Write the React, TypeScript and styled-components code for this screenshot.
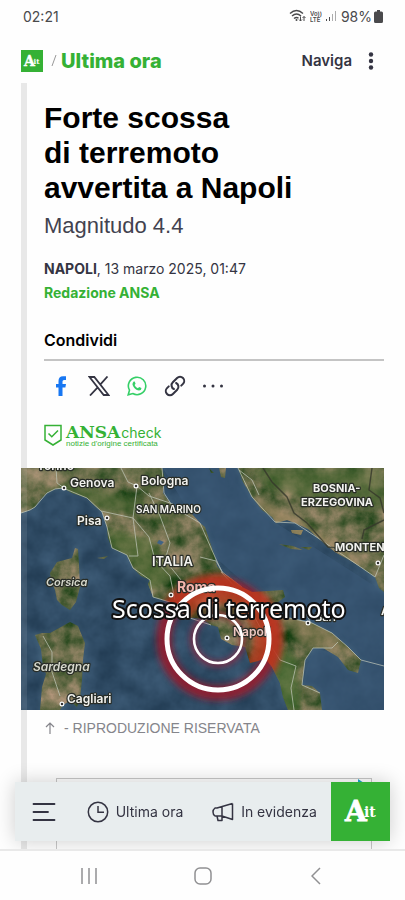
import React from "react";
import styled, { createGlobalStyle } from "styled-components";

const GlobalStyle = createGlobalStyle`
  * { box-sizing: border-box; }
  body { margin: 0; background: #fefefe; color: #000; font-family: Inter, "Liberation Sans", sans-serif; }
  h1, h2, p, figure { margin: 0; }
  button { font: inherit; color: inherit; background: none; border: 0; padding: 0; cursor: pointer; }
  a { color: inherit; text-decoration: none; }
  svg { display: block; }
`;

const green = "#35b135";
const ink = "#343442";

const Screen = styled.div`
  height: 100vh;
  display: flex;
  flex-direction: column;
  overflow: hidden;
`;

const StatusBar = styled.div`
  flex: none;
  height: 32px;
  padding: 0 22px 0 23px;
  display: flex;
  align-items: center;
  justify-content: space-between;
  font-size: 14px;
  color: #4a4a4c;
`;

const StatusIcons = styled.div`
  display: flex;
  align-items: center;
  gap: 4px;
`;

const Battery = styled.span`
  display: flex;
  align-items: center;
  gap: 2px;
`;

const Header = styled.header`
  flex: none;
  height: 51px;
  padding: 6px 21px 0;
  display: flex;
  align-items: center;
  justify-content: space-between;
`;

const Brand = styled.div`
  display: flex;
  align-items: center;
  gap: 8px;
`;

const Section = styled.a`
  color: ${green};
  font-size: 20px;
  line-height: 24px;
  font-weight: 800;
`;

const SectionGroup = styled.div`
  display: flex;
  align-items: center;
  gap: 4px;
`;

const Navigate = styled.button`
  display: flex;
  align-items: center;
  gap: 16px;
  font-size: 15px;
  font-weight: 600;
  color: ${ink};
`;

const Main = styled.main`
  flex: 1;
  min-height: 0;
  overflow: hidden;
  padding: 0 21px;
`;

const Article = styled.article`
  padding: 17px 0 0 17px;
  border-left: 6px solid #e8e8e8;
`;

const Title = styled.h1`
  font-family: "Liberation Sans", Arial, sans-serif;
  font-size: 30px;
  line-height: 35px;
  font-weight: 700;
`;

const Subtitle = styled.p`
  margin-top: 8px;
  font-family: "Liberation Sans", Arial, sans-serif;
  font-size: 22px;
  line-height: 26px;
  color: #42424f;
`;

const Meta = styled.p`
  margin-top: 18px;
  font-size: 14px;
  line-height: 24px;
  color: ${ink};
`;

const Author = styled.a`
  display: block;
  color: ${green};
  font-size: 14px;
  line-height: 24px;
  font-weight: 700;
`;

const ShareTitle = styled.h2`
  margin-top: 23px;
  padding-bottom: 7px;
  border-bottom: 2px solid #c4c4c4;
  font-size: 16px;
  line-height: 24px;
  font-weight: 600;
`;

const ShareRow = styled.div`
  display: flex;
  gap: 14px;
  margin: 13px 0 0 5px;
`;

const IconButton = styled.button`
  width: 24px;
  height: 24px;
  display: grid;
  place-items: center;
`;

const Check = styled.a`
  margin-top: 26px;
  height: 24px;
  display: flex;
  align-items: flex-start;
  gap: 4px;
  color: ${green};
`;

const CheckName = styled.span`
  display: flex;
  align-items: baseline;
  gap: 1px;
  font-size: 14px;
  line-height: 16px;
  b {
    font-family: "DejaVu Serif", serif;
    font-size: 17px;
  }
`;

const CheckNote = styled.small`
  display: block;
  font-family: "Liberation Sans", Arial, sans-serif;
  font-size: 8px;
  line-height: 6px;
  white-space: nowrap;
`;

const Figure = styled.figure`
  margin: 20px 0 0 -23px;
`;

const MapDrawing = styled.svg`
  position: relative;
  width: 100%;
  height: auto;
`;

const Caption = styled.figcaption`
  padding: 8px 0 0 23px;
  display: flex;
  align-items: center;
  gap: 8px;
  font-family: "Liberation Sans", Arial, sans-serif;
  font-size: 14px;
  line-height: 20px;
  color: #85858b;
`;

const AdSlot = styled.aside`
  margin: 40px 12px 0;
  height: 200px;
  border: 1px solid #c8c8c8;
  display: flex;
  justify-content: flex-end;
`;

const Toolbar = styled.nav`
  position: fixed;
  left: 15px;
  right: 15px;
  bottom: 59px;
  height: 59px;
  display: grid;
  grid-template-columns: 57px 126fr 133fr 59px;
  background: #e8edee;
  box-shadow: 0 0 20px rgba(0, 0, 0, 0.2);
`;

const Tool = styled.button<{ $brand?: boolean }>`
  display: flex;
  align-items: center;
  justify-content: center;
  gap: 7px;
  font-size: 14px;
  color: ${ink};
  white-space: nowrap;
  background: ${(p) => (p.$brand ? green : "transparent")};
  & + & { border-left: ${(p) => (p.$brand ? "0" : "1px solid #fafafa")}; }
`;

const SystemNav = styled.nav`
  position: relative;
  flex: none;
  height: 51px;
  padding: 0 71px;
  display: flex;
  align-items: center;
  justify-content: space-between;
  background: #fefefe;
  border-top: 2px solid #e9e9e9;
  color: #909092;
`;

const SystemButton = styled.button`
  width: 36px;
  height: 36px;
  display: grid;
  place-items: center;
`;

function Logo({ size, crop = "0 0 59 59" }: { size: number; crop?: string }) {
  return (
    <svg width={size} height={size} viewBox={crop} role="img" aria-label="ANSA.it">
      <rect width="59" height="59" fill={green} />
      <g fill="#fff" stroke="#fff" fontFamily="DejaVu Serif, serif" fontWeight="700">
        <text x="14" y="39" fontSize="28" strokeWidth="0.8">A</text>
        <text x="33" y="35" fontSize="14" strokeWidth="0">it</text>
      </g>
    </svg>
  );
}

const italy =
  "M0 0V45L9 42 14 39 19 32 26 25 34 21 42 20 51 25 66 30 74 38 81 44 86 59 87 70 91 80 106 87 112 100 120 108 129 112 127 116 132 129 149 134 158 141 166 149 181 151 190 157 197 159 200 171 211 177 224 179 229 195 237 193 244 190 251 199 259 215 262 229 267 242H301L299 225 291 218 281 217 284 192 292 180 302 180 317 189 327 202 337 205 340 192 327 179 311 165 291 155 264 149 253 142 247 140 256 135 264 129 262 122 247 123 231 124 221 119 211 111 201 104 196 98 194 89 184 59 179 55 171 46 160 43 152 39 142 25 143 8 141 0Z";
const balkans = "M217 0 222 14 231 29 241 42 251 49 255 55 266 52 274 55 287 61 297 70 314 84 330 93 341 100 354 109 358 120 363 124V0Z";
const corsica = "M54 80 57 81 58 96 59 119 55 134 49 142 41 137 36 132 34 122 30 112 29 105 36 94 51 90Z";
const sardinia = "M49 154 57 158 64 175 62 192 61 212 59 231 56 239 49 233 42 237 39 242H19L21 219 25 206 22 199 20 181 14 167 21 165 29 165Z";
const islands =
  "M198 0H205L204 10 200 9ZM188 0 193 5 190 5ZM218 2 231 13 238 27 232 24 221 12ZM270 62 282 62 280 67 271 65ZM258 76 272 78 282 82 270 81ZM279 79 291 79 288 82ZM76 90 87 88 83 91Z";

type Label = { x: number; y: number; size: number; text: string; weight?: number; italic?: boolean; fill?: string };
const labels: Label[] = [
  { x: 16, y: 2, size: 12, text: "Torino" },
  { x: 49, y: 19, size: 12, text: "Genova" },
  { x: 120, y: 17, size: 12, text: "Bologna" },
  { x: 56, y: 57, size: 12, text: "Pisa" },
  { x: 115, y: 45, size: 10, text: "SAN MARINO" },
  { x: 131, y: 98, size: 13, text: "ITALIA" },
  { x: 25, y: 118, size: 11, text: "Corsica", italic: true, fill: "#d6d8cc" },
  { x: 12, y: 203, size: 12, text: "Sardegna", italic: true, fill: "#d6d8cc" },
  { x: 46, y: 235, size: 12, text: "Cagliari" },
  { x: 292, y: 24, size: 11, text: "BOSNIA-", weight: 700 },
  { x: 280, y: 38, size: 11, text: "ERZEGOVINA", weight: 700 },
  { x: 314, y: 83, size: 11, text: "MONTENEGRO", weight: 700 },
  { x: 360, y: 147, size: 11, text: "Alb", weight: 700 },
  { x: 294, y: 153, size: 11, text: "Bari" },
  { x: 156, y: 124, size: 14, text: "Roma", weight: 700, fill: "#f3b5ae" },
  { x: 212, y: 168, size: 12, text: "Napoli", weight: 600, fill: "#f0c9c2" },
];
const cities = [[43, 20], [115, 18], [86, 50], [150, 127], [206, 170], [287, 155], [41, 236], [357, 95]];

function QuakeMap() {
  return (
    <MapDrawing viewBox="0 0 363 242" role="img" aria-label="Scossa di terremoto a Napoli">
      <defs>
        <filter id="terrain" x="0" y="0" width="100%" height="100%" colorInterpolationFilters="sRGB">
          <feTurbulence type="fractalNoise" baseFrequency="0.05" numOctaves="5" seed="8" />
          <feColorMatrix values="0.9 0 0 0 -0.05  0.5 0 0 0 0.17  0.6 0 0 0 -0.02  0 0 0 0 1" />
        </filter>
        <filter id="depth" x="0" y="0" width="100%" height="100%" colorInterpolationFilters="sRGB">
          <feTurbulence type="fractalNoise" baseFrequency="0.04" numOctaves="4" seed="4" />
          <feColorMatrix values="0.14 0 0 0 0.12  0.16 0 0 0 0.22  0.18 0 0 0 0.31  0 0 0 0 1" />
        </filter>
        <filter id="soft" x="-20%" y="-20%" width="140%" height="140%">
          <feGaussianBlur stdDeviation="3" />
        </filter>
        <filter id="shore" x="-10%" y="-10%" width="120%" height="120%">
          <feGaussianBlur stdDeviation="2" />
        </filter>
        <clipPath id="land">
          <path d={italy} />
          <path d={balkans} />
          <path d={corsica} />
          <path d={sardinia} />
          <path d={islands} />
        </clipPath>
      </defs>
      <rect width="363" height="242" filter="url(#depth)" />
      <path d="M142 0H217L255 55 363 124V242H301L281 217 292 180 340 192 264 149 231 122 194 89Z" fill="#3b5876" opacity="0.6" />
      <g fill="none" stroke="#5f8291" strokeWidth="2" filter="url(#shore)" opacity="0.35">
        <path d={italy} />
        <path d={balkans} />
        <path d={corsica} />
        <path d={sardinia} />
      </g>
      <g clipPath="url(#land)">
        <rect width="363" height="242" fill="#6a7650" filter="url(#terrain)" />
        <g filter="url(#soft)">
          <path d="M0 0H140L145 12 100 10 60 5 0 20Z" fill="#8b8963" opacity="0.3" />
          <path d="M231 28 245 35 275 50 318 78 345 100 330 97 255 58Z" fill="#a68d67" opacity="0.65" />
          <path d="M20 22 60 15 110 30 140 40 150 60 130 45 90 45Z" fill="#4c6832" opacity="0.6" />
          <path d="M85 60 130 70 150 110 130 125 110 95 90 80Z" fill="#566f37" opacity="0.6" />
          <path d="M230 0H363V40L300 35 245 20Z" fill="#526c38" opacity="0.6" />
          <path d="M255 145 300 155 335 185 300 180 280 175Z" fill="#8d8058" opacity="0.5" />
          <path d="M240 175 262 180 275 190 280 242H262Z" fill="#426b2c" opacity="0.7" />
        </g>
      </g>
      <g fill="none" stroke="#c2c8bb" strokeWidth="0.9" opacity="0.8" strokeLinejoin="round">
        <path d="M0 45 9 42 14 39 26 25 34 21 42 20 66 30 81 44 86 59 91 80 106 87 112 100 129 112 132 129 149 134 166 149 190 157" />
        <path d="M264 149 291 155 311 165 327 179 340 192M299 225 281 217 284 192 292 180 311 180 317 174M141 0 143 25 152 39 179 55 194 89 201 104 221 119M217 0 231 29 254 54 274 55 297 70 341 100 354 109 363 87M218 2 231 12 238 27" />
        <path d="M35 0 36 15 43 20M100 0 107 14 116 18 128 28 152 36M116 18 112 50 117 88 108 88M112 50 128 69 134 92 149 108 154 132M112 50 80 43M128 25 139 48 149 75 144 92 160 112M22 168 31 184 31 204 39 228M340 192 363 198M200 104 220 125 248 175 259 192 275 198 270 220 273 242M282 140 290 155M179 89 195 93 202 105" />
      </g>
      <path d="M242 0 251 14 266 29 273 45 286 55 307 79 316 80M351 0 348 22 359 30 363 45M363 52 343 62 341 71" fill="none" stroke="#35372b" strokeWidth="1.4" opacity="0.8" />
      <path d="M138 72 143 74 140 77 136 75Z" fill="#406384" />
      <circle cx="197" cy="171" r="54" fill="none" stroke="#a01528" strokeWidth="15" filter="url(#soft)" opacity="0.8" />
      <g clipPath="url(#land)">
        <circle cx="197" cy="171" r="50" fill="none" stroke="#c2381b" strokeWidth="30" filter="url(#soft)" opacity="0.75" />
      </g>
      <circle cx="197" cy="171" r="25" fill="none" stroke="#a51f36" strokeWidth="5" filter="url(#soft)" opacity="0.8" />
      <g fontFamily="Inter, sans-serif" stroke="#292d27" strokeWidth="2.4" strokeLinejoin="round" paintOrder="stroke">
        {labels.map((l) => (
          <text key={l.text} x={l.x} y={l.y} fontSize={l.size} fontWeight={l.weight ?? 600} fontStyle={l.italic ? "italic" : "normal"} fill={l.fill ?? "#f2f2ee"}>
            {l.text}
          </text>
        ))}
      </g>
      <g fill="#333" stroke="#fff" strokeWidth="1.2">
        {cities.map(([x, y]) => (
          <circle key={x} cx={x} cy={y} r="1.9" />
        ))}
      </g>
      <circle cx="197" cy="171" r="51" fill="none" stroke="#fff" strokeWidth="5" />
      <circle cx="197" cy="171" r="24" fill="none" stroke="#fff" strokeWidth="2.6" />
      <text x="91" y="150" fontFamily="Noto Sans, sans-serif" fontSize="25" fontWeight="400" fill="#fff" stroke="#111" strokeWidth="4" strokeLinejoin="round" paintOrder="stroke">
        Scossa di terremoto
      </text>
      <rect width="6" height="242" fill="#fff" opacity="0.09" />
    </MapDrawing>
  );
}

export default function App() {
  return (
    <>
      <GlobalStyle />
      <Screen>
        <StatusBar>
          <span>02:21</span>
          <StatusIcons>
            <svg width="17" height="14" viewBox="0 0 17 14" fill="none" stroke="#4a4a4c" strokeWidth="1.4">
              <path d="M1 4.500Q7.500-1.500 14 4.500M3 7Q7.500 3 12 7M5 9.500Q7.500 7.500 9.500 9.200" />
              <path d="M11.500 7.500V12M10 10.500l1.500 1.500 1.500-1.500M15 12V7.500M13.500 9l1.500-1.500L16.500 9" strokeWidth="1" />
              <circle cx="7.500" cy="11" r="1" fill="#4a4a4c" stroke="none" />
            </svg>
            <svg width="12" height="13" viewBox="0 0 12 13" fill="#4a4a4c" fontFamily="Inter, sans-serif" fontWeight="600">
              <text x="0" y="6" fontSize="6">Vo))</text>
              <text x="0" y="12" fontSize="6">LTE</text>
            </svg>
            <svg width="11" height="12" viewBox="0 0 11 12" fill="#4a4a4c">
              <path d="M0 9h1v2H0zM3 7h1v4H3z" />
              <path d="M6 4h1v7H6zM9 1h1v10H9z" opacity=".45" />
            </svg>
            <Battery>
              98%
              <svg width="9" height="13" viewBox="0 0 9 13" fill="#4a4a4c">
                <path d="M3 0h3v1.500h1.500Q9 1.500 9 3v8.500Q9 13 7.500 13h-6Q0 13 0 11.500V3Q0 1.500 1.500 1.500H3z" />
              </svg>
            </Battery>
          </StatusIcons>
        </StatusBar>

        <Header>
          <Brand>
            <a href="#home"><Logo size={22} crop="8 7 44 44" /></a>
            <SectionGroup>
              <svg width="6" height="14" viewBox="0 0 6 14" stroke="#999" fill="none"><path d="M5 1 1 12" /></svg>
              <Section href="#ultima-ora">Ultima ora</Section>
            </SectionGroup>
          </Brand>
          <Navigate>
            Naviga
            <svg width="16" height="18" viewBox="0 0 16 18" fill={ink}>
              <circle cx="3" cy="2.500" r="2.200" /><circle cx="3" cy="9" r="2.200" /><circle cx="3" cy="15.500" r="2.200" />
            </svg>
          </Navigate>
        </Header>

        <Main>
          <Article>
            <Title>Forte scossa<br />di terremoto<br />avvertita a Napoli</Title>
            <Subtitle>Magnitudo 4.4</Subtitle>
            <Meta><strong>NAPOLI</strong>, 13 marzo 2025, 01:47</Meta>
            <Author href="#redazione">Redazione ANSA</Author>
            <ShareTitle>Condividi</ShareTitle>
            <ShareRow>
              <IconButton aria-label="Facebook">
                <svg width="12" height="20" viewBox="0 0 12 20" fill="#1877f2">
                  <path d="M3.500 20v-8.500H1V8h2.500V5Q3.500.3 8 .3h3V4H9Q7.500 4 7.500 5.500V8H11l-.6 3.500H7.500V20z" />
                </svg>
              </IconButton>
              <IconButton aria-label="X">
                <svg width="22" height="20" viewBox="0 0 22 20" fill="none" stroke={ink} strokeWidth="1.800">
                  <path d="M1.500 1H6.300L20.500 19H15.700zM19.500.5 12.200 8.700M9.700 11.300 2 19.500" />
                </svg>
              </IconButton>
              <IconButton aria-label="WhatsApp">
                <svg width="20" height="20" viewBox="0 0 20 20" fill="none" stroke="#35cf67" strokeWidth="1.600">
                  <path d="M1.200 18.800 2.500 14.200A8.700 8.700 0 1 1 5.800 17.500z" />
                  <path d="M6.700 5.500h1L8.600 7.800l-1 1.300q1 2.200 3.300 3.200l1.200-1.300 2.400 1.100q-.1 2.500-2.500 2.500-4.700-.8-6.500-5.900-.2-2 1.200-3.200z" fill="#35cf67" stroke="none" />
                </svg>
              </IconButton>
              <IconButton aria-label="Copia link">
                <svg width="22" height="22" viewBox="0 0 24 24" fill="none" stroke={ink} strokeWidth="2.200" strokeLinecap="round" strokeLinejoin="round">
                  <path d="M13.200 8.700a4.500 4.500 0 0 1 1.200 7.300l-4.700 4.700a4.500 4.500 0 0 1-6.400-6.400l1.900-1.900M18.800 11.600l1.900-1.900a4.500 4.500 0 0 0-6.400-6.400L9.600 8a4.500 4.500 0 0 0 1.200 7.300" />
                </svg>
              </IconButton>
              <IconButton aria-label="Altro">
                <svg width="22" height="6" viewBox="0 0 22 6" fill={ink}>
                  <circle cx="2.500" cy="3" r="1.500" /><circle cx="11" cy="3" r="1.500" /><circle cx="19.500" cy="3" r="1.500" />
                </svg>
              </IconButton>
            </ShareRow>
            <Check href="#ansacheck">
              <svg width="18" height="22" viewBox="0 0 18 22" fill="none" stroke={green} strokeWidth="1.500">
                <path d="M1 1.500h16v14.500l-8 5-8-5zM4.500 9.500l3.300 3.300L14 6.500" />
              </svg>
              <span>
                <CheckName><b>ANSA</b>check</CheckName>
                <CheckNote>notizie d'origine certificata</CheckNote>
              </span>
            </Check>
            <Figure>
              <QuakeMap />
              <Caption>
                <svg width="12" height="14" viewBox="0 0 12 14" fill="none" stroke="#85858b" strokeWidth="1.200"><path d="M6 13V2M2 6l4-4 4 4" /></svg>
                - RIPRODUZIONE RISERVATA
              </Caption>
            </Figure>
            <AdSlot aria-label="Pubblicità">
              <svg width="16" height="12" viewBox="0 0 16 12"><path d="M3 0 12 6 3 11Z" fill="#1ba6c9" /></svg>
            </AdSlot>
          </Article>
        </Main>

        <Toolbar>
          <Tool aria-label="Menu">
            <svg width="24" height="20" viewBox="0 0 24 20" stroke={ink} strokeWidth="1.800" strokeLinecap="round">
              <path d="M1.500 2H22.500M1.500 10H16M1.500 18H22.500" />
            </svg>
          </Tool>
          <Tool>
            <svg width="22" height="22" viewBox="0 0 22 22" fill="none" stroke={ink} strokeWidth="1.500">
              <circle cx="11" cy="11" r="9.700" /><path d="M11 5V11.200H17" />
            </svg>
            Ultima ora
          </Tool>
          <Tool>
            <svg width="22" height="20" viewBox="0 0 22 20" fill="none" stroke={ink} strokeWidth="1.500" strokeLinejoin="round">
              <path d="M20.500 1.500V17.500L10 14H3Q1 12.500 1 10T3 6H5L20.500 1.500M10 5V18.500H6L5 14" />
            </svg>
            In evidenza
          </Tool>
          <Tool $brand aria-label="ANSA.it"><Logo size={59} /></Tool>
        </Toolbar>

        <SystemNav>
          <SystemButton aria-label="App recenti">
            <svg width="18" height="16" viewBox="0 0 18 16" stroke="currentColor" strokeWidth="1.500"><path d="M2 0V16M9 0V16M16 0V16" /></svg>
          </SystemButton>
          <SystemButton aria-label="Home">
            <svg width="18" height="18" viewBox="0 0 18 18" fill="none" stroke="currentColor" strokeWidth="1.500"><rect x="1" y="1" width="16" height="16" rx="5" /></svg>
          </SystemButton>
          <SystemButton aria-label="Indietro">
            <svg width="10" height="18" viewBox="0 0 10 18" fill="none" stroke="currentColor" strokeWidth="1.500"><path d="M9 1 1 9 9 17" /></svg>
          </SystemButton>
        </SystemNav>
      </Screen>
    </>
  );
}
